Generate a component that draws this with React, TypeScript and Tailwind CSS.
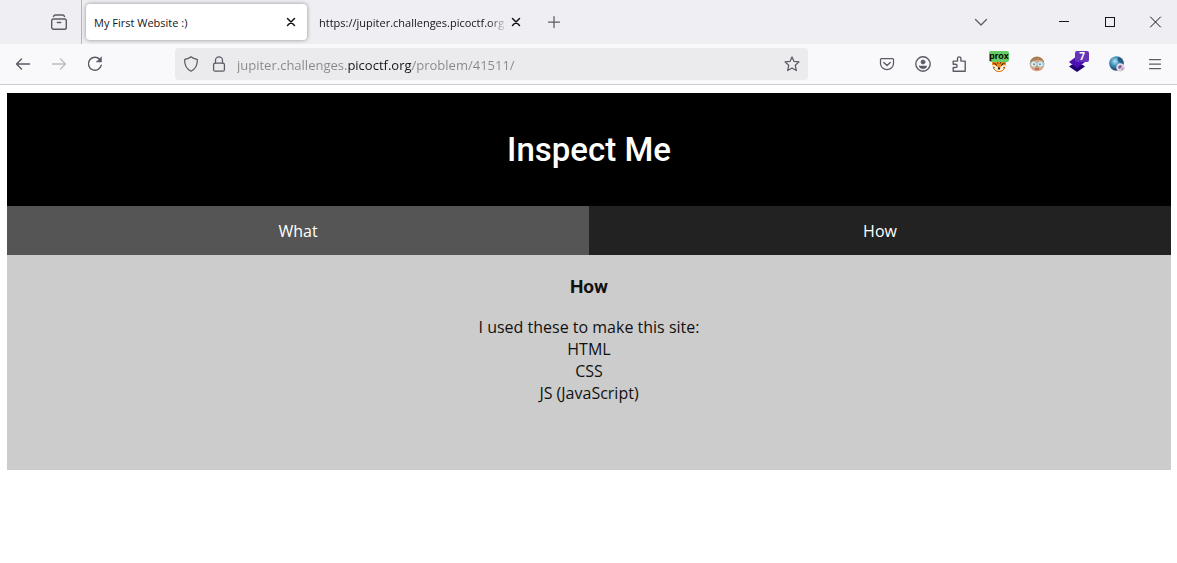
import { useState, type ReactNode } from "react";

type IconProps = { children: ReactNode; className?: string; size?: number };

function Icon({ children, className = "", size = 16 }: IconProps) {
  return (
    <svg
      width={size}
      height={size}
      viewBox="0 0 16 16"
      fill="none"
      stroke="currentColor"
      strokeWidth="1.25"
      strokeLinecap="round"
      strokeLinejoin="round"
      className={className}
      aria-hidden="true"
    >
      {children}
    </svg>
  );
}

function BarButton({ label, className = "w-9", children }: { label: string; className?: string; children: ReactNode }) {
  return (
    <button type="button" aria-label={label} className={`flex h-full shrink-0 items-center justify-center ${className}`}>
      {children}
    </button>
  );
}

function CloseIcon() {
  return (
    <Icon size={16}>
      <path d="M4.5 4.5l7 7M11.5 4.5l-7 7" stroke="#15141a" strokeWidth="1.5" />
    </Icon>
  );
}

function TabStrip() {
  return (
    <div className="flex h-11 items-center bg-[#eeeef3] text-[#5b5b66]">
      <div className="flex h-full w-[82px] shrink-0 items-center justify-end border-r border-[#b4b4bb] pr-1">
        <BarButton label="View recent browsing">
          <Icon>
            <rect x="0.700" y="5" width="14.600" height="10.300" rx="1.800" strokeWidth="1.400" />
            <path d="M2.500 2.600Q2.800 1 4.500 1h7q1.700 0 2 1.600M6.300 8.500h3.400" strokeWidth="1.400" />
          </Icon>
        </BarButton>
      </div>
      <div className="ml-1 flex h-9 w-[221px] shrink-0 items-center rounded bg-white pl-2 pr-2 shadow-[0_0_4px_rgba(0,0,0,0.4)]">
        <button type="button" className="min-w-0 flex-1 pt-0.5 text-left text-[11px] text-[#15141a]">
          My First Website :)
        </button>
        <button type="button" aria-label="Close tab">
          <CloseIcon />
        </button>
      </div>
      <div className="ml-3 flex h-9 w-[205px] shrink-0 items-center">
        <button
          type="button"
          className="min-w-0 flex-1 whitespace-nowrap pt-0.5 text-left text-[11px] text-[#15141a] [mask-image:linear-gradient(to_left,transparent,black_20px)]"
        >
          https://jupiter.challenges.picoctf.org
        </button>
        <button type="button" aria-label="Close tab">
          <CloseIcon />
        </button>
      </div>
      <BarButton label="New tab" className="ml-2 w-11">
        <Icon>
          <path d="M8 2.5v11M2.5 8h11" />
        </Icon>
      </BarButton>
      <div className="ml-auto flex h-full">
        <BarButton label="List all tabs" className="mr-10 w-10">
          <Icon>
            <path d="M2.5 5.5L8 11l5.500-5.500" />
          </Icon>
        </BarButton>
        <BarButton label="Minimize" className="w-[46px]">
          <Icon>
            <path d="M3 7.500h10" stroke="#15141a" strokeWidth="1" strokeLinecap="butt" />
          </Icon>
        </BarButton>
        <BarButton label="Maximize" className="w-[46px]">
          <Icon>
            <rect x="3.500" y="3.500" width="9" height="9" stroke="#15141a" strokeWidth="1" strokeLinejoin="miter" />
          </Icon>
        </BarButton>
        <BarButton label="Close" className="w-11">
          <Icon>
            <path d="M3.500 3l10 10M13.500 3l-10 10" stroke="#15141a" strokeWidth="1" />
          </Icon>
        </BarButton>
      </div>
    </div>
  );
}

function FoxIcon() {
  return (
    <svg width="16" height="16" viewBox="0 0 16 16" aria-hidden="true">
      <path d="M1 1l4 3h6l4-3v8l-2 4-5 3-5-3-2-4z" fill="#f08a1c" />
      <path d="M1 9l4 .5L8 13l3-3.500 4-.5-2 4-5 3-5-3z" fill="#fff3e2" />
      <path d="M2 7l3 1M14 7l-3 1M2 11l2 1M14 11l-2 1M6 5l1 3M10 5L9 8" stroke="#7a3b08" />
      <path d="M4 8l2 1.500M12 8l-2 1.500M7 12h2l-1 1.500z" stroke="#2b1a0d" fill="#2b1a0d" />
      <path d="M2 12l3 3 3 .700 3-.700 3-3" stroke="#e47610" fill="none" />
    </svg>
  );
}

function FaceIcon() {
  return (
    <svg width="16" height="16" viewBox="0 0 16 16" aria-hidden="true">
      <circle cx="8" cy="8" r="7.300" fill="#d9a383" />
      <path d="M1 7a7 6.500 0 0 1 14 0l-2-2.500L9 3.500 4 5z" fill="#a68056" />
      <path d="M.5 7.500h15" stroke="#9fc4cd" strokeWidth="1.500" />
      <circle cx="4.700" cy="8.300" r="2.700" fill="#e4f6f8" stroke="#a9d0d9" />
      <circle cx="11.300" cy="8.300" r="2.700" fill="#e4f6f8" stroke="#a9d0d9" />
      <circle cx="5" cy="8.300" r="1" fill="#5d8796" />
      <circle cx="11" cy="8.300" r="1" fill="#5d8796" />
      <path d="M6 13h4" stroke="#9c4d3c" strokeWidth="1.200" />
      <path d="M7.300 10.500h1.400" stroke="#b9785d" />
    </svg>
  );
}

function LayersIcon() {
  return (
    <svg width="16" height="16" viewBox="0 0 16 16" aria-hidden="true">
      <path d="M0 10.500l3-2h10l3 2L8 16z" fill="#230072" />
      <path d="M0 6l8-6 8 6-8 6z" fill="#4c0eb5" />
    </svg>
  );
}

function GlobeIcon() {
  return (
    <svg width="16" height="16" viewBox="0 0 16 16" aria-hidden="true">
      <defs>
        <radialGradient id="globe" cx="0.4" cy="0.35" r="0.7">
          <stop offset="0" stopColor="#b9e2f5" />
          <stop offset="0.45" stopColor="#3f8fb8" />
          <stop offset="1" stopColor="#0d2f55" />
        </radialGradient>
      </defs>
      <circle cx="7.500" cy="7.500" r="7.300" fill="url(#globe)" />
      <path d="M9 1c2 .300 3.500 1.500 4.500 3.500l-1 2.500-2.500-1-1.500-2z" fill="#245c87" />
      <circle cx="11.500" cy="11.500" r="4.300" fill="#ddd7e0" />
      <path d="M9 11l2-2 2 1-1 2-2 1z" fill="#8f559e" />
      <path d="M13 12l2-.500-1 2.500-2 0z" fill="#b391bd" />
      <path d="M9.500 9l1-.800" stroke="#fff" />
    </svg>
  );
}

function Toolbar() {
  const [address, setAddress] = useState("jupiter.challenges.picoctf.org/problem/41511/");
  return (
    <div className="flex h-[41px] items-center border-b border-[#ccccd1] bg-[#f9f9fb] pl-[5px] pr-1 text-[#5b5b66]">
      <BarButton label="Back">
        <Icon>
          <path d="M14.500 8h-13M6.500 3l-5 5 5 5" strokeWidth="1.400" />
        </Icon>
      </BarButton>
      <BarButton label="Forward">
        <Icon className="text-[#bdbdc2]">
          <path d="M1.500 8h13M9.500 3l5 5-5 5" strokeWidth="1.400" />
        </Icon>
      </BarButton>
      <BarButton label="Reload">
        <Icon>
          <path d="M14.300 9.200A6.500 6.500 0 1 1 12.700 3.300" strokeWidth="1.400" />
          <path d="M14.500 1v5h-5z" fill="currentColor" strokeWidth="0.500" />
        </Icon>
      </BarButton>
      <div className="ml-[62px] mr-[61px] flex h-8 min-w-0 flex-1 items-center rounded bg-[#ebebed]">
        <BarButton label="Tracking protection" className="w-8">
          <Icon>
            <path d="M8 .8C9.500 2.200 12 3 14.200 3.300c.5 5-1.700 9.700-6.200 11.900C3.500 13 1.300 8.300 1.800 3.300 4 3 6.500 2.200 8 .8z" />
          </Icon>
        </BarButton>
        <BarButton label="Site information" className="mr-1.5 w-6">
          <Icon>
            <rect x="2.600" y="7" width="10.800" height="8.200" rx="1.500" />
            <path d="M4.500 7V4.300a3.500 3.500 0 0 1 7 0V7" />
          </Icon>
        </BarButton>
        <input
          type="text"
          aria-label="Address"
          spellCheck={false}
          value={address}
          onChange={(event) => setAddress(event.target.value)}
          className="h-full min-w-0 flex-1 bg-[linear-gradient(to_right,#87878b_111px,#15141a_111px,#15141a_175px,#87878b_175px)] bg-clip-text pt-px text-[13px] text-transparent caret-[#15141a] outline-none"
        />
        <BarButton label="Bookmark this page" className="w-8">
          <Icon>
            <path d="M8 .9l2 4.500 5 .500-3.700 3.400 1 5.200L8 12l-4.300 2.500 1-5.200L1 5.900l5-.500z" />
          </Icon>
        </BarButton>
      </div>
      <BarButton label="Save to Pocket">
        <Icon>
          <path d="M2.500 2.500h11q1 0 1 1V7.500a6.500 6 0 0 1-13 0v-4q0-1 1-1z" />
          <path d="M4.800 6.500L8 9.500l3.200-3" strokeWidth="1.400" />
        </Icon>
      </BarButton>
      <BarButton label="Account">
        <Icon>
          <circle cx="8" cy="8" r="7.200" strokeWidth="1.400" />
          <circle cx="8" cy="6" r="2" fill="currentColor" strokeWidth="0.800" />
          <path d="M4.300 10h7.400c0 1.800-1.800 2.800-3.700 2.800S4.300 11.800 4.300 10z" fill="currentColor" strokeWidth="0.500" />
        </Icon>
      </BarButton>
      <BarButton label="Extensions" className="mr-0.5 w-9">
        <Icon>
          <path d="M2.200 15.200V11.500h2.300a1.600 1.600 0 0 0 0-3.200H2.200V5.100h4.300V2.600a1.700 1.700 0 0 1 3.400 0v2.500h4.300v10.100z" strokeWidth="1.400" />
        </Icon>
      </BarButton>
      <BarButton label="Proxy switcher" className="relative w-10">
        <FoxIcon />
        <span className="absolute left-2.5 top-[7px] h-[11px] w-5 rounded-[2px] bg-[#66cc66] text-center font-['Liberation_Sans',sans-serif] text-[9px] font-bold leading-[11px] text-black">
          prox
        </span>
      </BarButton>
      <BarButton label="User agent" className="w-9">
        <FaceIcon />
      </BarButton>
      <BarButton label="Technologies" className="relative ml-0.5 w-10">
        <LayersIcon />
        <span className="absolute left-[18px] top-[7px] h-[11px] w-3.5 rounded-[2px] bg-[#6634b8] text-center text-[10px] font-bold leading-[11px] text-white">
          7
        </span>
      </BarButton>
      <BarButton label="Web tools" className="w-10">
        <GlobeIcon />
      </BarButton>
      <BarButton label="Menu">
        <Icon>
          <path d="M2.500 3.500h11M2.500 8h11M2.500 12.500h11" />
        </Icon>
      </BarButton>
    </div>
  );
}

export default function App() {
  return (
    <div className="min-h-screen bg-white font-['Open_Sans',sans-serif]">
      <header>
        <TabStrip />
        <Toolbar />
      </header>
      <main className="pl-[7px] pr-1.5 pt-2 text-center">
        <div className="bg-black py-9">
          <h1 className="font-['Roboto',sans-serif] text-[33px] font-medium leading-[41px] text-white">Inspect Me</h1>
        </div>
        <div role="tablist" className="grid grid-cols-2 text-[16px] font-medium leading-[21px] text-white">
          <button type="button" role="tab" aria-selected={false} className="bg-[#555555] pb-[13px] pt-[15px]">
            What
          </button>
          <button type="button" role="tab" aria-selected={true} className="bg-[#222222] pb-[13px] pt-[15px]">
            How
          </button>
        </div>
        <section role="tabpanel" className="bg-[#cccccc] pb-[66px] pt-5 text-[#111111]">
          <h3 className="font-['Roboto',sans-serif] text-[19px] font-bold leading-6">How</h3>
          <p className="mt-[17px] text-[16px] leading-[22px]">
            I used these to make this site:
            <br />
            HTML
            <br />
            CSS
            <br />
            JS (JavaScript)
          </p>
        </section>
      </main>
    </div>
  );
}
